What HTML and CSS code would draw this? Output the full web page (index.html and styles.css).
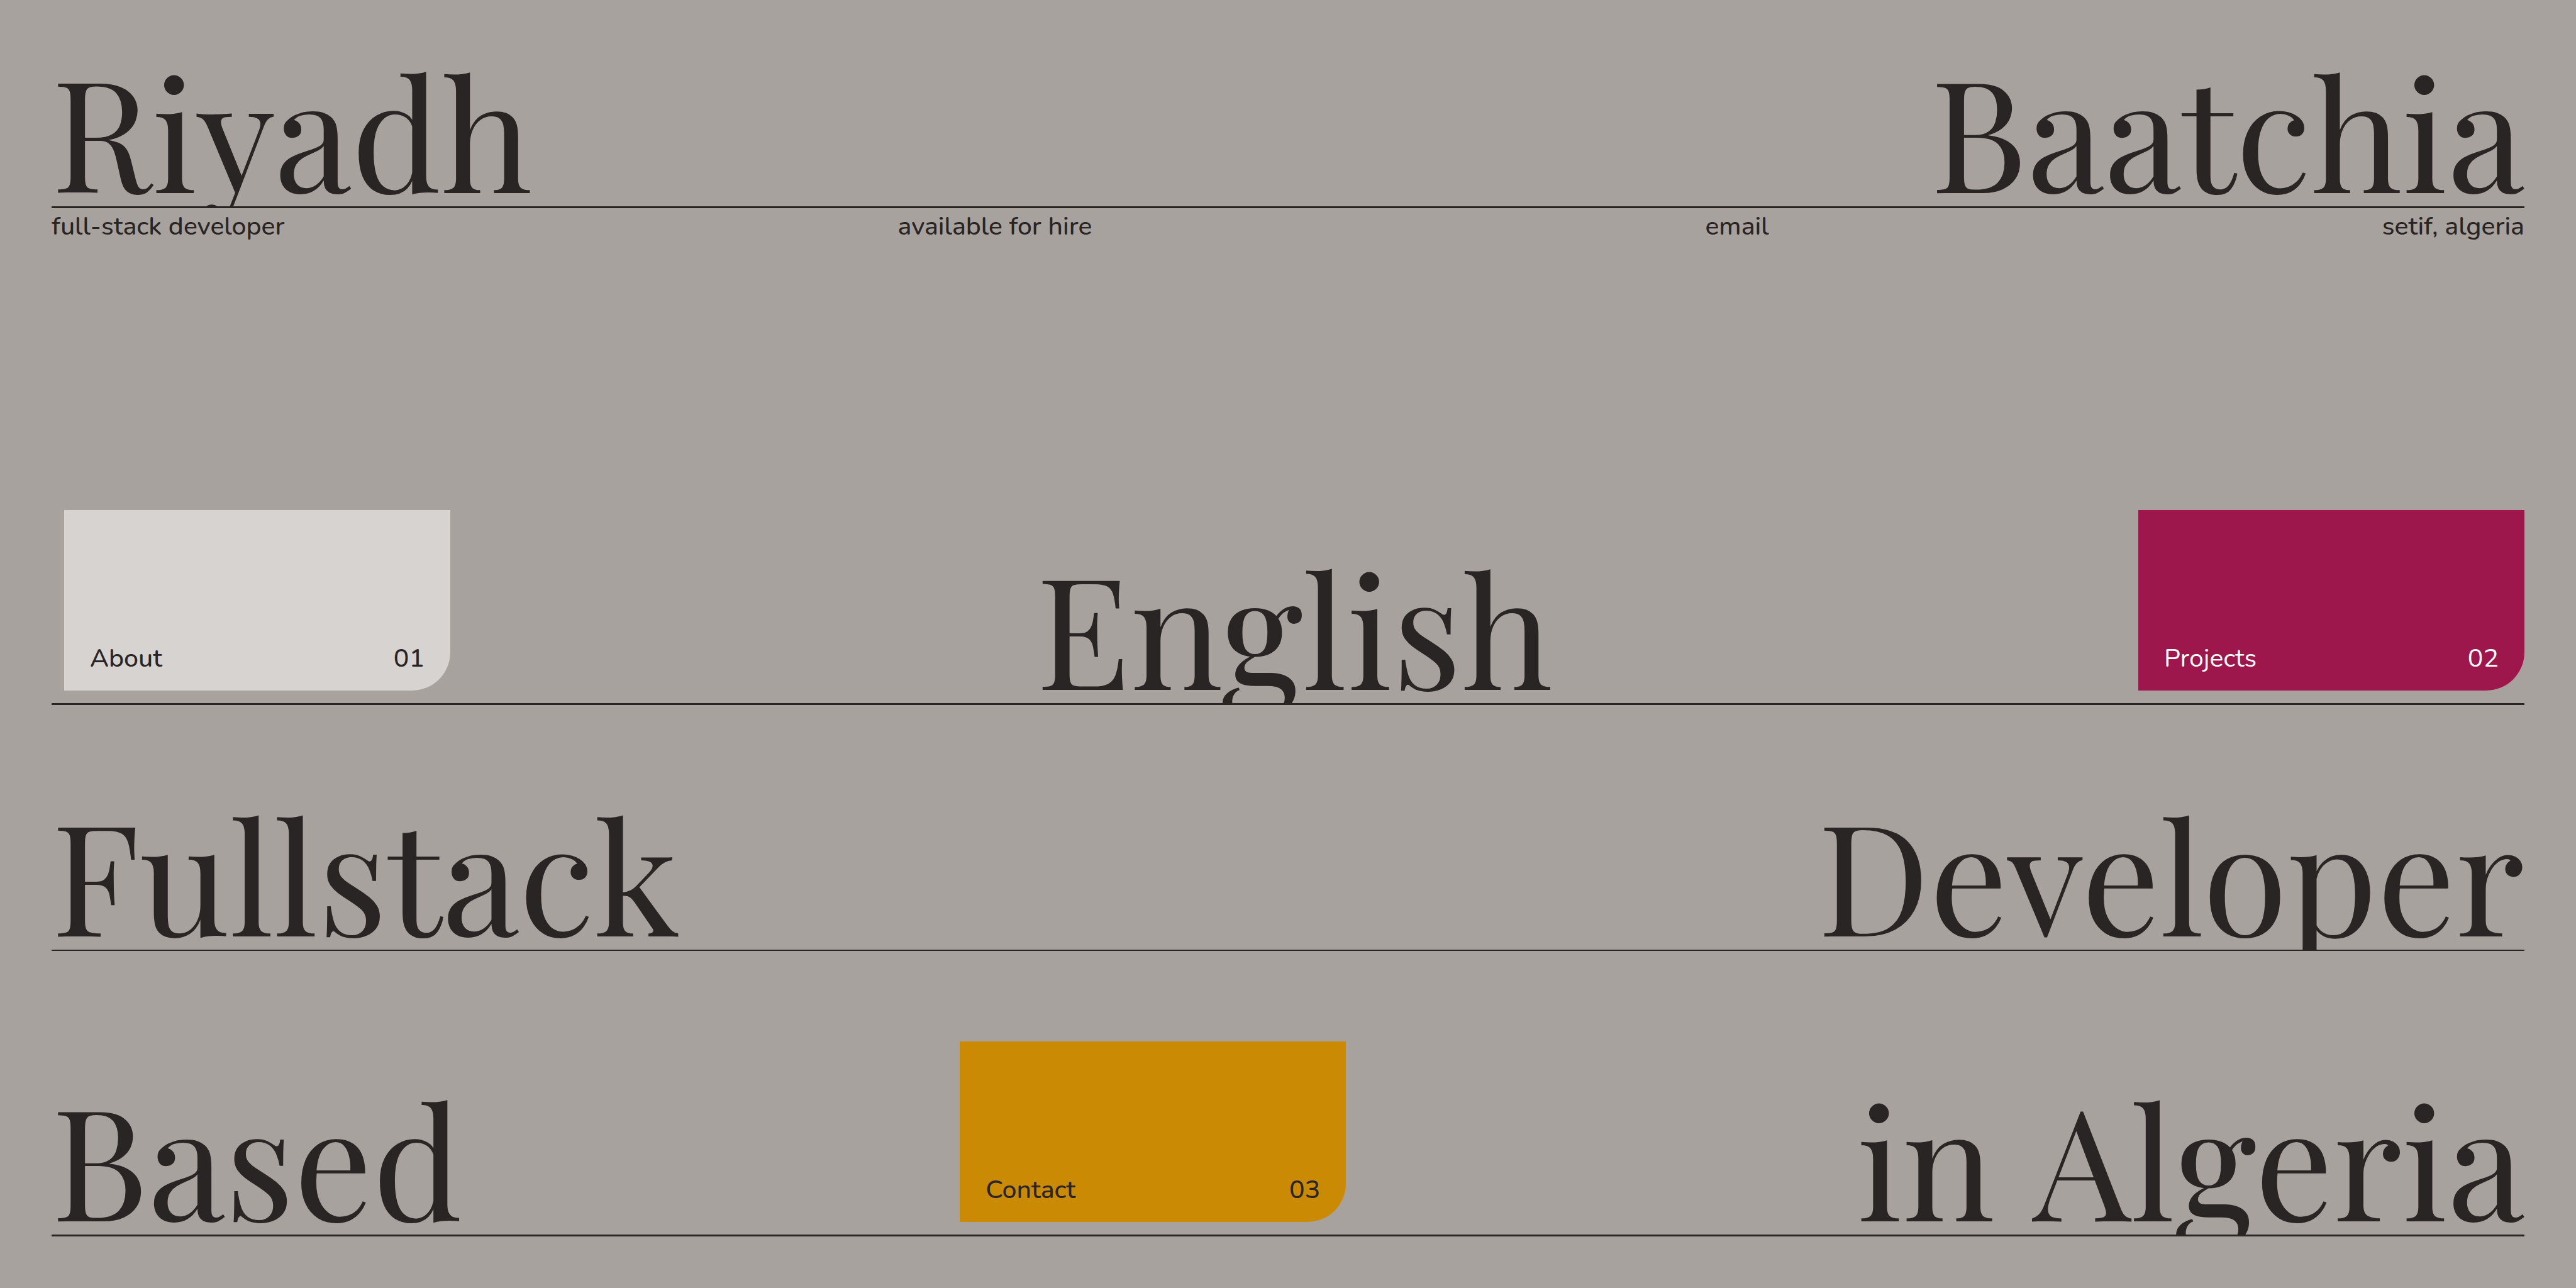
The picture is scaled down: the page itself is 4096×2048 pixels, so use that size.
FILE: index.html
```html
<!DOCTYPE html>
<html lang="en">
<head>
<meta charset="utf-8">
<meta name="viewport" content="width=device-width, initial-scale=1">
<title>Riyadh Baatchia</title>
<link rel="stylesheet" href="styles.css">
</head>
<body>
<header>
  <h1 class="row">
    <span class="display">Riyadh</span>
    <span class="display">Baatchia</span>
  </h1>
  <div class="meta">
    <span>full-stack developer</span>
    <span>available for hire</span>
    <a href="#email">email</a>
    <span>setif, algeria</span>
  </div>
</header>
<main>
  <section class="row row-language">
    <a class="card card-about" href="#about"><span>About</span><span>01</span></a>
    <button class="display" type="button">English</button>
    <a class="card card-projects" href="#projects"><span>Projects</span><span>02</span></a>
  </section>
  <section class="row row-role">
    <span class="display">Fullstack</span>
    <span class="display">Developer</span>
  </section>
  <section class="row row-place">
    <span class="display">Based</span>
    <a class="card card-contact" href="#contact"><span>Contact</span><span>03</span></a>
    <span class="display">in&nbsp;Algeria</span>
  </section>
</main>
</body>
</html>
```
FILE: styles.css
```css
* {
  box-sizing: border-box;
}

body {
  margin: 0;
  padding: 82px;
  background: #a8a29e;
  color: #292524;
  font-family: Nunito, Lato, sans-serif;
  font-size: 41px;
  font-weight: 500;
  line-height: 58px;
}

a {
  color: inherit;
  text-decoration: none;
}

.row {
  display: flex;
  justify-content: space-between;
  align-items: flex-end;
  margin: 0;
  border-bottom: 3px solid #292524;
}

/* Descenders are cut off where they meet the rule. */
.display {
  display: block;
  margin: 0;
  padding: 0;
  border: 0;
  background: none;
  color: inherit;
  overflow: hidden;
  font-family: "Playfair Display", "Liberation Serif", serif;
  font-size: 246px;
  font-weight: 400;
  line-height: 246px;
  white-space: nowrap;
}

.meta {
  display: flex;
  justify-content: space-between;
}

.row-language {
  margin-top: 422px;
}

.row-role {
  margin-top: 143px;
  border-bottom-width: 2px;
}

.row-place {
  margin-top: 144px;
}

.card {
  display: flex;
  justify-content: space-between;
  align-items: flex-end;
  width: 15%;
  min-width: 614px;
  height: 287px;
  margin-bottom: 20px;
  padding: 22px 41px;
  border-bottom-right-radius: 61px;
}

.card-about {
  margin-left: 20px;
  background: #d6d3d1;
}

.card-projects {
  background: #9d174d;
  color: #fff;
  font-weight: 400;
}

.card-contact {
  margin-right: 21px;
  background: #ca8a04;
}
```
